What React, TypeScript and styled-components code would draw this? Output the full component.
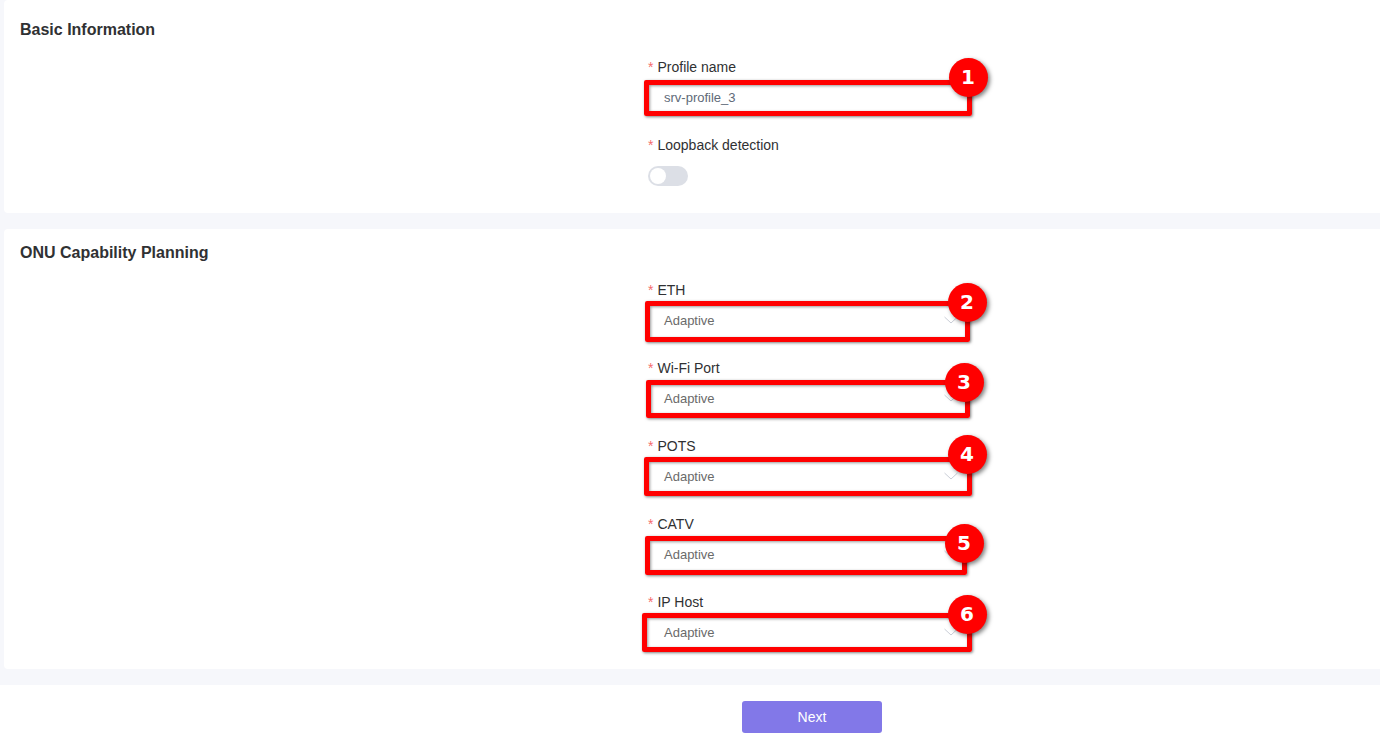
import React from "react";
import styled, { createGlobalStyle } from "styled-components";

const Global = createGlobalStyle`
  html, body { margin: 0; padding: 0; background: #f6f7fb; height: 739px; overflow: hidden; }
  body { font-family: "Liberation Sans", Arial, sans-serif; }
`;

const Page = styled.div`
  display: flex;
  flex-direction: column;
  height: 739px;
  overflow: hidden;
`;

const Sections = styled.main`
  display: flex;
  flex-direction: column;
  gap: 16px;
  padding-left: 4px;
`;

const Card = styled.section<{ $top: number; $bottom: number }>`
  background: #fff;
  border-radius: 4px 0 0 4px;
  padding: ${(p) => p.$top}px 0 ${(p) => p.$bottom}px 16px;
`;

const Title = styled.h2`
  margin: 0 0 15px;
  font-size: 16px;
  line-height: 22px;
  font-weight: 700;
  color: #303133;
`;

const Form = styled.div`
  display: flex;
  flex-direction: column;
  gap: 20px;
  width: 320px;
  margin-left: 628px;
`;

const Field = styled.div`
  display: flex;
  flex-direction: column;
  gap: 4px;
`;

const Label = styled.label`
  font-size: 14px;
  line-height: 22px;
  color: #303133;
  &::before {
    content: "*";
    color: #f56c6c;
    margin-right: 4px;
  }
`;

const Control = styled.div<{ $select: boolean }>`
  position: relative;
  display: flex;
  align-items: center;
  justify-content: space-between;
  box-sizing: border-box;
  width: 320px;
  height: 32px;
  padding: 0 10px 2px 16px;
  background: #fff;
  font-size: 13px;
  color: ${(p) => (p.$select ? "#6a6a6a" : "#606a78")};
`;

const SwitchRow = styled.div`
  display: flex;
  align-items: center;
  height: 32px;
`;

const Track = styled.div`
  display: flex;
  align-items: center;
  box-sizing: border-box;
  width: 40px;
  height: 20px;
  padding: 0 2px;
  border-radius: 10px;
  background: #dcdfe6;
`;

const Knob = styled.span`
  width: 16px;
  height: 16px;
  border-radius: 50%;
  background: #fff;
`;

const Mark = styled.span<{ $t: number; $l: number; $r: number; $b: number }>`
  position: absolute;
  top: ${(p) => p.$t}px;
  left: ${(p) => p.$l}px;
  right: ${(p) => p.$r}px;
  bottom: ${(p) => p.$b}px;
  border: 5px solid #ff0000;
  border-radius: 2px;
  box-shadow: 1px 1px 3px rgba(0, 0, 0, 0.5), inset 1px 1px 3px rgba(0, 0, 0, 0.4);
`;

const Badge = styled.span<{ $x: number; $y: number }>`
  position: absolute;
  left: ${(p) => p.$x - 19.5}px;
  top: ${(p) => p.$y - 19.5}px;
  width: 39px;
  height: 39px;
  display: flex;
  align-items: center;
  justify-content: center;
  border-radius: 50%;
  background: #ff0000;
  color: #fff;
  font-family: "DejaVu Sans", sans-serif;
  font-weight: 700;
  font-size: 20px;
  box-shadow: 2px 2px 4px rgba(0, 0, 0, 0.5);
`;

const Chevron = styled.svg`
  width: 14px;
  height: 8px;
  fill: none;
  stroke: #c9cdd6;
  stroke-width: 1;
`;

const Footer = styled.footer`
  flex: 1;
  margin-top: 16px;
  background: #fff;
  padding: 16px 0 0 742px;
`;

const NextButton = styled.button`
  display: block;
  width: 140px;
  height: 32px;
  padding: 0;
  border: 0;
  border-radius: 3px;
  background: #8278e8;
  color: #fff;
  font: 14px "Liberation Sans", Arial, sans-serif;
`;

type Box = [number, number, number, number];
type Item = {
  label: string;
  value: string;
  select: boolean;
  n: number;
  box: Box;
  at: [number, number];
};

const capability: Item[] = [
  { label: "ETH", value: "Adaptive", select: true, n: 2, box: [-4, -3, -2, -5], at: [319, -3] },
  { label: "Wi-Fi Port", value: "Adaptive", select: true, n: 3, box: [-3, -2, -2, -3], at: [316, -1] },
  { label: "POTS", value: "Adaptive", select: true, n: 4, box: [-4, -4, -4, -3], at: [319, -7] },
  { label: "CATV", value: "Adaptive", select: true, n: 5, box: [-3, -3, 1, -4], at: [316, 4] },
  { label: "IP Host", value: "Adaptive", select: true, n: 6, box: [-4, -6, -4, -3], at: [319, -3] },
];

function Row({ label, value, select, n, box, at }: Item) {
  return (
    <Field>
      <Label>{label}</Label>
      <Control $select={select}>
        <span>{value}</span>
        {select && (
          <Chevron viewBox="0 0 14 8">
            <path d="M0.5 1 L7 7 L13.5 1" />
          </Chevron>
        )}
        <Mark $t={box[0]} $l={box[1]} $r={box[2]} $b={box[3]} />
        <Badge $x={at[0]} $y={at[1]}>{n}</Badge>
      </Control>
    </Field>
  );
}

export default function App() {
  return (
    <Page>
      <Global />
      <Sections>
        <Card $top={19} $bottom={21}>
          <Title>Basic Information</Title>
          <Form>
            <Row label="Profile name" value="srv-profile_3" select={false} n={1} box={[-2, -4, -4, -2]} at={[320, -5]} />
            <Field>
              <Label>Loopback detection</Label>
              <SwitchRow>
                <Track>
                  <Knob />
                </Track>
              </SwitchRow>
            </Field>
          </Form>
        </Card>
        <Card $top={13} $bottom={20}>
          <Title>ONU Capability Planning</Title>
          <Form>
            {capability.map((c) => (
              <Row key={c.n} {...c} />
            ))}
          </Form>
        </Card>
      </Sections>
      <Footer>
        <NextButton>Next</NextButton>
      </Footer>
    </Page>
  );
}
